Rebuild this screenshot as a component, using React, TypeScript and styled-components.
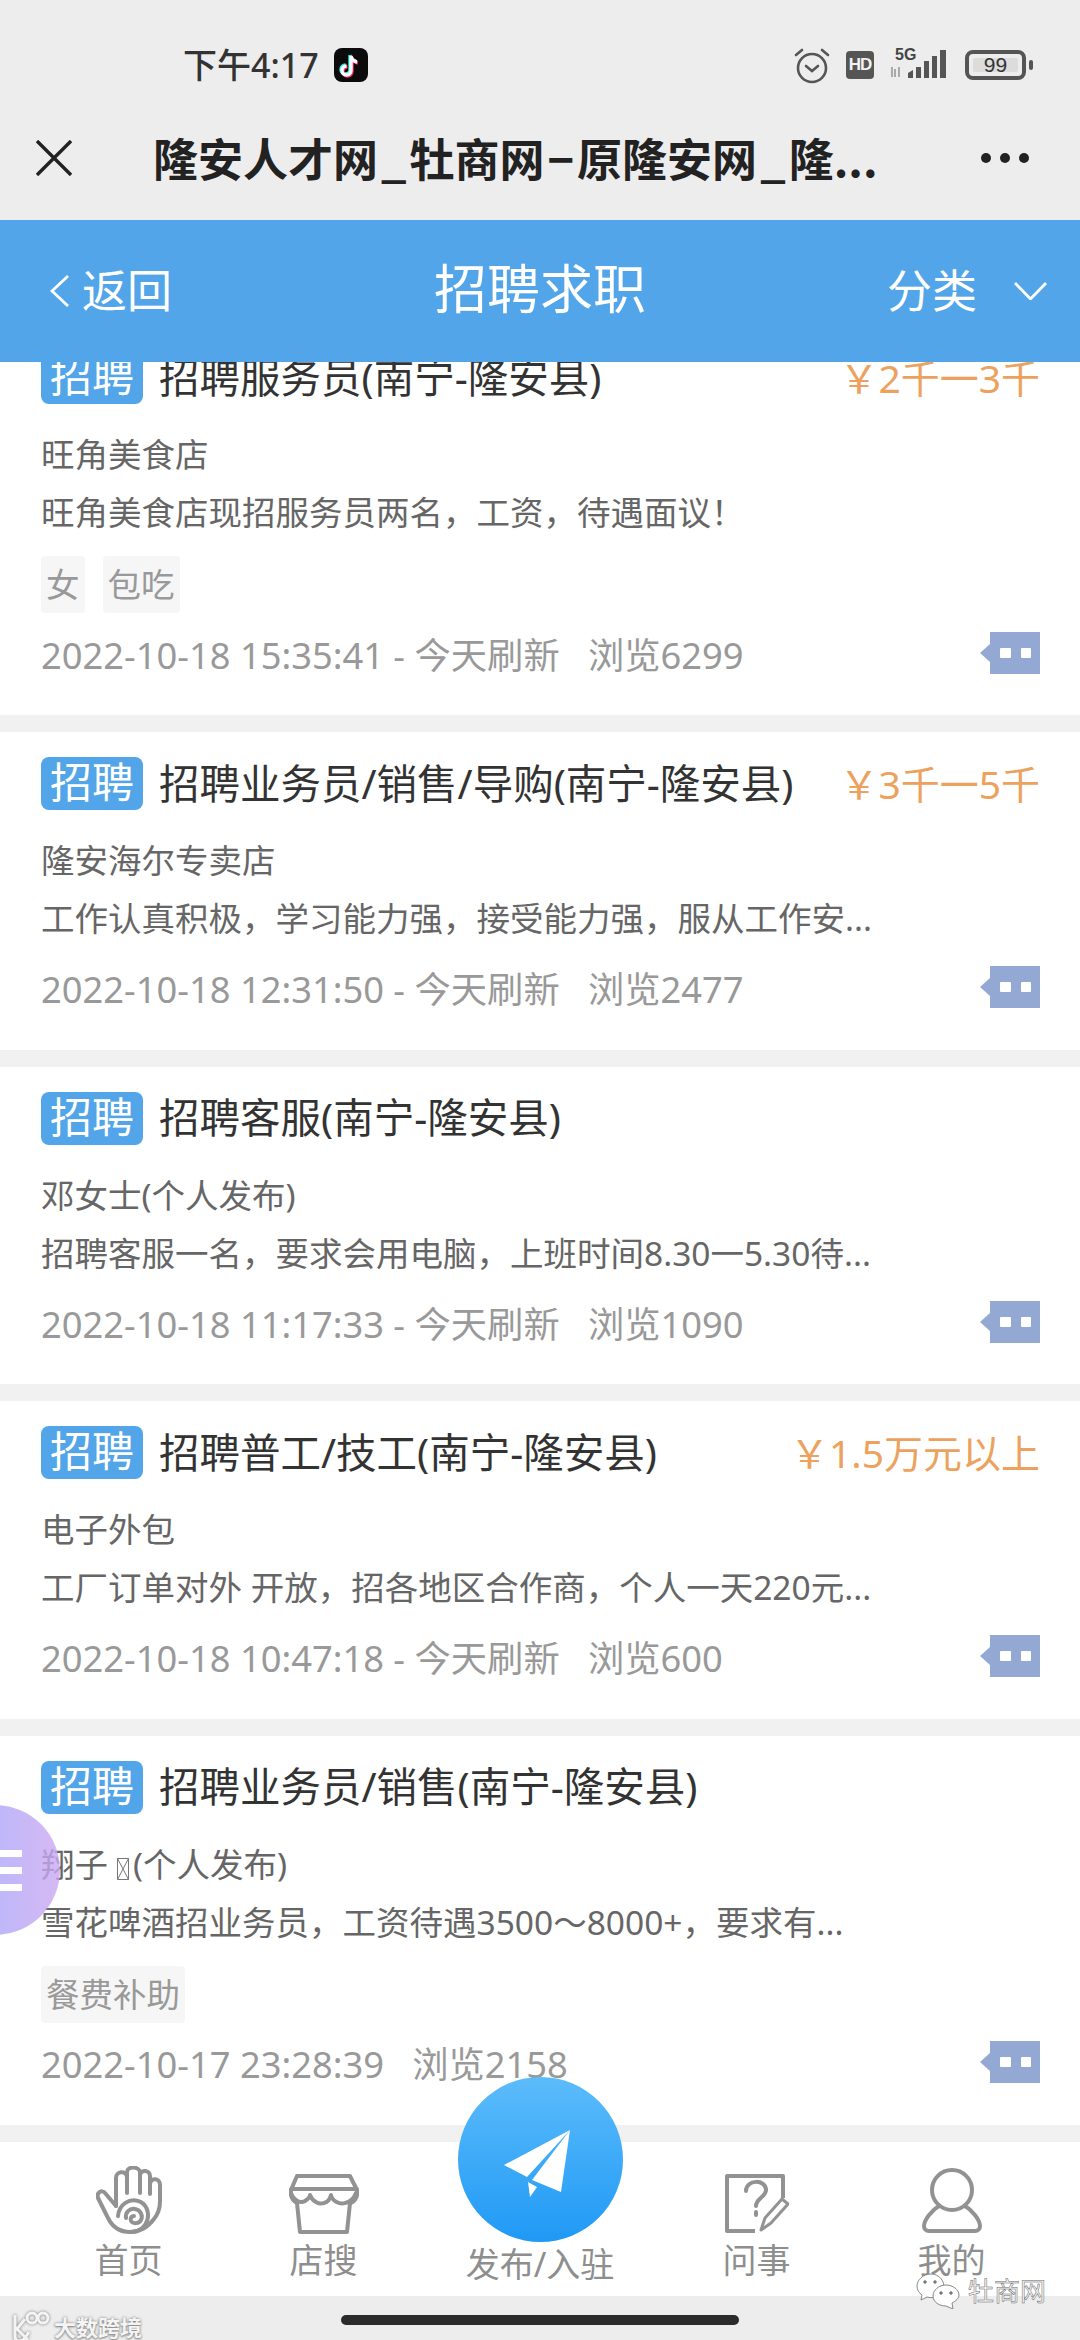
import React from "react";
import styled, { createGlobalStyle } from "styled-components";

const Global = createGlobalStyle`
  html, body { margin: 0; padding: 0; background: #fff; }
  * { box-sizing: border-box; }
`;

const FONT = `"Noto Sans", "Noto Sans CJK SC", sans-serif`;

const Page = styled.div`
  position: relative;
  width: 1080px;
  height: 2340px;
  overflow: hidden;
  display: flex;
  flex-direction: column;
  background: #f1f1f1;
  font-family: ${FONT};
`;

const TopArea = styled.div`
  background: #ededed;
  height: 220px;
  flex: none;
  display: flex;
  flex-direction: column;
`;

const StatusBar = styled.div`
  height: 110px;
  padding: 48px 54px 0 183px;
  display: flex;
  align-items: flex-start;
`;

const Time = styled.span`
  font-size: 34px;
  line-height: 34px;
  font-weight: 500;
  color: #333;
  margin-right: 15px;
`;

const StatusRight = styled.div`
  margin-left: auto;
  display: flex;
  align-items: flex-start;
`;

const HdBadge = styled.span`
  width: 28px;
  height: 28px;
  margin: 3px 17px 0 16px;
  border-radius: 4px;
  background: #555;
  color: #f2f2f2;
  font: 700 17px/28px "Liberation Sans", sans-serif;
  letter-spacing: -1px;
  text-align: center;
`;

const Signal = styled.div`
  position: relative;
  width: 59px;
  height: 32px;
  margin-right: 15px;
`;

const FiveG = styled.span`
  position: absolute;
  left: 4px;
  top: -1px;
  font: 700 16px/16px "Liberation Sans", sans-serif;
  color: #444;
`;

const Battery = styled.div`
  width: 61px;
  height: 30px;
  margin-top: 2px;
  padding: 4px;
  border: 4px solid #555;
  border-radius: 8px;
  position: relative;
`;

const BatteryLevel = styled.span`
  display: block;
  height: 14px;
  background: #dcdcdc;
  border-radius: 2px;
  color: #333;
  font: 400 21px/14px "Liberation Sans", sans-serif;
  text-align: center;
`;

const BatteryTip = styled.span`
  position: absolute;
  right: -11px;
  top: 6px;
  width: 4px;
  height: 10px;
  border-radius: 2px;
  background: #555;
`;

const NavBar = styled.div`
  height: 110px;
  padding: 0 50px 14px 36px;
  display: flex;
  align-items: center;
`;

const NavTitle = styled.span`
  margin-left: 81px;
  white-space: nowrap;
  font-family: "Noto Sans CJK SC", sans-serif;
  font-size: 45px;
  line-height: 60px;
  font-weight: 700;
  color: #222;
`;

const NavMark = styled.span`
  padding: 0 3px;
`;

const Header = styled.header`
  flex: none;
  height: 142px;
  background: #52a5e8;
  color: #fff;
  position: relative;
  z-index: 2;
  display: grid;
  grid-template-columns: 1fr auto 1fr;
  align-items: center;
  padding: 0 33px;
`;

const Back = styled.div`
  display: flex;
  align-items: center;
  gap: 12px;
  margin-left: 17px;
  font-size: 45px;
  line-height: 50px;
`;

const HeaderTitle = styled.div`
  font-size: 53px;
  line-height: 60px;
  margin-top: -4px;
`;

const Category = styled.div`
  display: flex;
  align-items: center;
  justify-content: flex-end;
  gap: 37px;
  font-size: 45px;
  line-height: 50px;
`;

const List = styled.main`
  flex: none;
  height: 1780px;
  overflow: hidden;
`;

const Cards = styled.div`
  margin-top: -36px;
  display: flex;
  flex-direction: column;
  gap: 17px;
`;

const Card = styled.article`
  background: #fff;
  padding: 25px 40px 36.5px 41px;
`;

const CardHead = styled.div`
  display: flex;
  align-items: center;
  height: 53px;
`;

const Badge = styled.span`
  width: 102px;
  height: 53px;
  flex: none;
  border-radius: 8px;
  background: #52a5e8;
  color: #fff;
  font-size: 42px;
  line-height: 50px;
  text-align: center;
`;

const CardTitle = styled.span`
  margin-left: 16px;
  font-size: 40.5px;
  line-height: 50px;
  color: #333;
  white-space: nowrap;
`;

const Price = styled.span`
  margin-left: auto;
  font-size: 39px;
  line-height: 50px;
  color: #eca25e;
  white-space: nowrap;
`;

const Company = styled.div`
  margin-top: 32px;
  font-size: 33.5px;
  line-height: 36px;
  color: #666;
`;

const Desc = styled.div`
  margin-top: 22px;
  font-size: 33.5px;
  line-height: 36px;
  color: #666;
  white-space: nowrap;
`;

const Tags = styled.div`
  display: flex;
  gap: 18px;
  margin: 26px 0 -11.5px;
`;

const Tag = styled.span`
  height: 57px;
  padding: 0 5px;
  border-radius: 4px;
  background: #f6f6f6;
  color: #999;
  font-size: 33.5px;
  line-height: 56px;
`;

const Meta = styled.div`
  margin-top: 35px;
  height: 42px;
  padding-bottom: 5px;
  display: flex;
  align-items: center;
  justify-content: space-between;
  color: #999;
  font-size: 36.3px;
  line-height: 37px;
  white-space: pre;
`;

const Tofu = styled.svg`
  width: 12px;
  height: 22px;
  margin: 0 4px 0 9px;
  vertical-align: -3px;
`;

const CommentSvg = styled.svg`
  flex: none;
  margin-top: -5px;
`;

const TabBar = styled.nav`
  flex: none;
  height: 154px;
  background: #fff;
  padding: 0 31px;
  display: grid;
  grid-template-columns: 195px 195px 1fr 195px 195px;
`;

const Tab = styled.div<{ $publish?: boolean }>`
  display: flex;
  flex-direction: column;
  align-items: center;
  justify-content: flex-end;
  gap: ${(p) => (p.$publish ? "0" : "8px")};
  padding-bottom: ${(p) => (p.$publish ? "14px" : "18px")};
  color: #8e8e8e;
  font-size: 34px;
  line-height: 36px;
`;

const TabIcon = styled.svg`
  display: block;
  fill: none;
  stroke: #929292;
  stroke-width: 4;
  stroke-linecap: round;
  stroke-linejoin: round;
`;

const BottomBar = styled.div`
  flex: 1;
  background: #ededed;
  display: flex;
  justify-content: center;
  padding-top: 19px;
`;

const HomeIndicator = styled.div`
  width: 398px;
  height: 10px;
  border-radius: 5px;
  background: #2b2b2b;
`;

const Fab = styled.div`
  position: absolute;
  left: 458px;
  top: 2077px;
  width: 165px;
  height: 165px;
  border-radius: 50%;
  background: linear-gradient(#5cbcfb, #2099f5);
  z-index: 3;
`;

const SideMenu = styled.div`
  position: absolute;
  left: -70px;
  top: 1805px;
  width: 130px;
  height: 130px;
  border-radius: 50%;
  background: linear-gradient(90deg, #8fa4ff, #cca8f2);
  opacity: 0.8;
  z-index: 3;
  display: flex;
  flex-direction: column;
  align-items: flex-end;
  justify-content: center;
  gap: 10px;
  padding-right: 38px;
`;

const MenuLine = styled.span`
  width: 22px;
  height: 7px;
  background: #fff;
`;

const WatermarkLeft = styled.div`
  position: absolute;
  left: 10px;
  top: 2309px;
  display: flex;
  align-items: center;
  gap: 4px;
  z-index: 4;
  color: #f4f4f4;
  font-size: 22px;
  line-height: 28px;
  font-weight: 700;
  text-shadow: 0 0 3px #888, 0 1px 2px #888;
`;

const WatermarkRight = styled.div`
  position: absolute;
  left: 916px;
  top: 2273px;
  display: flex;
  align-items: center;
  gap: 8px;
  z-index: 4;
  color: #f8f8f8;
  font-size: 26px;
  line-height: 30px;
  -webkit-text-stroke: 0.5px #666;
`;

const Close = () => (
  <svg width="36" height="36" viewBox="0 0 36 36" fill="none" stroke="#222" strokeWidth="3.4">
    <path d="M1 1 35 35M35 1 1 35" />
  </svg>
);

const Dots = () => (
  <svg width="50" height="12" viewBox="0 0 50 12" fill="#222" style={{ marginLeft: "auto" }}>
    <circle cx="6" cy="6" r="5" />
    <circle cx="25" cy="6" r="5" />
    <circle cx="44" cy="6" r="5" />
  </svg>
);

const Alarm = () => (
  <svg width="36" height="36" viewBox="0 0 36 36" fill="none" stroke="#555" strokeWidth="2.6" strokeLinecap="round">
    <circle cx="18" cy="20" r="14" />
    <path d="M12 18l6 5 6-5M2 7l6-5M34 7l-6-5" />
  </svg>
);

const Tiktok = () => (
  <svg width="34" height="34" viewBox="0 0 34 34">
    <rect width="34" height="34" rx="8" fill="#0b0b0b" />
    <g fill="none" strokeWidth="3.4">
      <path d="M17 8v14.5a4.5 4.5 0 1 1-4.5-4.5M17 8c.5 3.5 3 5.5 6 6" stroke="#25f4ee" transform="translate(-1 -1)" />
      <path d="M17 8v14.5a4.5 4.5 0 1 1-4.5-4.5M17 8c.5 3.5 3 5.5 6 6" stroke="#fe2c55" transform="translate(1 1)" />
      <path d="M17 8v14.5a4.5 4.5 0 1 1-4.5-4.5M17 8c.5 3.5 3 5.5 6 6" stroke="#fff" />
    </g>
  </svg>
);

const SignalBars = () => (
  <svg width="59" height="32" viewBox="0 0 59 32" style={{ position: "absolute", left: 0, top: 0 }}>
    <path d="M1 19v10M4 21v8M8 29V19" stroke="#aaa" strokeWidth="2" fill="none" />
    <path d="M17 30V25l5-3v8zM25 30V19h5v11zM33 30V13h5v17zM41 30V8h5v22zM49 30V2h6v28z" fill="#555" />
  </svg>
);

const ChevronLeft = () => (
  <svg width="20" height="32" viewBox="0 0 20 32" fill="none" stroke="#fff" strokeWidth="2.8">
    <path d="M18 1 2 16l16 15" />
  </svg>
);

const ChevronDown = () => (
  <svg width="33" height="18" viewBox="0 0 33 18" fill="none" stroke="#fff" strokeWidth="2.8">
    <path d="M1 1l15.5 16L32 1" />
  </svg>
);

const CommentIcon = () => (
  <CommentSvg width="60" height="42" viewBox="0 0 60 42">
    <path d="M10 0h50v42H10V30L0 21l10-9z" fill="#93a8d2" />
    <rect x="20" y="16" width="11" height="10" rx="1" fill="#fff" />
    <rect x="41" y="16" width="10" height="10" rx="1" fill="#fff" />
  </CommentSvg>
);

const HandIcon = () => (
  <TabIcon width="66" height="68" viewBox="0 0 66 68">
    <path d="M20 40 9 27c-3-4-9 0-7 5l10 20c5 10 13 14 22 14 11 0 18-5 24-13 5-6 6-12 6-18V19c0-7-9-8-10-1v10" />
    <path d="M20 40V12c0-7 10-8 11-1v16M31 11V6c0-6 12-6 13 0v21M44 9c1-6 10-5 10 1v9" />
    <path d="M30 52c-1-6 4-10 9-9 6 1 8 7 6 11-2 4-8 4-10 1-1-2 0-5 3-5" />
    <path d="M22 50c1-12 12-18 20-15 8 2 12 11 9 20-2 6-8 10-14 11" />
  </TabIcon>
);

const StoreIcon = () => (
  <TabIcon width="70" height="60" viewBox="0 0 70 60">
    <path d="M8 2h53l7 14c1 6-1 10-6 13M8 2 2 16c-1 6 1 10 6 13M2 15h66" />
    <path d="M2 19c2 7 9 11 14 8 3-2 5-4 5-6 2 6 9 10 14 8 4-1 6-4 7-8 1 6 9 10 14 8 6-1 9-5 11-10" />
    <path d="M8 29l3 29h47l3-29" />
  </TabIcon>
);

const AskIcon = () => (
  <TabIcon width="64" height="60" viewBox="0 0 64 60">
    <path d="M30 57H2V2h56v22" strokeLinecap="butt" />
    <path d="M21 17c0-12 20-12 20-1 0 7-10 8-10 16M31 38v3" />
    <path d="M36 56l4-12 17-19 6 5-17 19zM36 56l10-7" strokeWidth="3" />
  </TabIcon>
);

const UserIcon = () => (
  <TabIcon width="60" height="66" viewBox="0 0 60 66">
    <circle cx="30" cy="22" r="20" />
    <path d="M17 38C10 42 2 52 2 58c0 3 2 5 5 5h46c3 0 5-2 5-5 0-6-8-16-15-20" />
  </TabIcon>
);

const Plane = () => (
  <svg width="165" height="165" viewBox="0 0 165 165" fill="#fff">
    <path d="M112 53 46 88l23 12z" />
    <path d="M112 53 74 103l29 12z" />
    <path d="M70 105l2 15 7-10z" />
  </svg>
);

const WeChat = () => (
  <svg width="44" height="36" viewBox="0 0 44 36" fill="#fff" stroke="#888" strokeWidth="1">
    <path d="M15 1C7 1 1 7 1 13c0 4 2 7 5 9l-1 5 6-3c4 1 8 1 11-1 5-3 7-9 5-14-2-5-7-8-12-8z" />
    <path d="M30 12c-7 0-13 5-13 11s6 10 13 10l7 3-1-6c4-2 7-5 7-8 0-5-6-10-13-10z" />
    <circle cx="25" cy="20" r="1.3" fill="#666" />
    <circle cx="35" cy="20" r="1.3" fill="#666" />
    <circle cx="9" cy="9" r="1.3" fill="#666" />
    <circle cx="19" cy="9" r="1.3" fill="#666" />
  </svg>
);

const KuaiLogo = () => (
  <svg width="40" height="36" viewBox="0 0 40 36" fill="none" stroke="#f4f4f4" strokeWidth="3" style={{ filter: "drop-shadow(0 0 1.5px #777)" }}>
    <path d="M5 6v22c0 5 7 5 10 1l4-6M15 10 7 20l11 11" />
    <circle cx="22" cy="9" r="5" />
    <circle cx="33" cy="9" r="5" />
  </svg>
);

type Job = {
  title: string;
  price?: string;
  company: React.ReactNode;
  desc: string;
  tags?: string[];
  meta: string;
};

const jobs: Job[] = [
  {
    title: "招聘服务员(南宁-隆安县)",
    price: "￥2千一3千",
    company: "旺角美食店",
    desc: "旺角美食店现招服务员两名，工资，待遇面议！",
    tags: ["女", "包吃"],
    meta: "2022-10-18 15:35:41 - 今天刷新   浏览6299",
  },
  {
    title: "招聘业务员/销售/导购(南宁-隆安县)",
    price: "￥3千一5千",
    company: "隆安海尔专卖店",
    desc: "工作认真积极，学习能力强，接受能力强，服从工作安...",
    meta: "2022-10-18 12:31:50 - 今天刷新   浏览2477",
  },
  {
    title: "招聘客服(南宁-隆安县)",
    company: "邓女士(个人发布)",
    desc: "招聘客服一名，要求会用电脑，上班时间8.30一5.30待...",
    meta: "2022-10-18 11:17:33 - 今天刷新   浏览1090",
  },
  {
    title: "招聘普工/技工(南宁-隆安县)",
    price: "￥1.5万元以上",
    company: "电子外包",
    desc: "工厂订单对外 开放，招各地区合作商，个人一天220元...",
    meta: "2022-10-18 10:47:18 - 今天刷新   浏览600",
  },
  {
    title: "招聘业务员/销售(南宁-隆安县)",
    company: (
      <>
        翔子
        <Tofu viewBox="0 0 12 22" fill="none" stroke="#777" strokeWidth="1">
          <path d="M.5.5h11v21H.5zM.5.5l11 21M11.5.5l-11 21" />
        </Tofu>
        (个人发布)
      </>
    ),
    desc: "雪花啤酒招业务员，工资待遇3500～8000+，要求有...",
    tags: ["餐费补助"],
    meta: "2022-10-17 23:28:39   浏览2158",
  },
];

export default function App() {
  return (
    <Page>
      <Global />
      <TopArea>
        <StatusBar>
          <Time>下午4:17</Time>
          <Tiktok />
          <StatusRight>
            <Alarm />
            <HdBadge>HD</HdBadge>
            <Signal>
              <SignalBars />
              <FiveG>5G</FiveG>
            </Signal>
            <Battery>
              <BatteryLevel>99</BatteryLevel>
              <BatteryTip />
            </Battery>
          </StatusRight>
        </StatusBar>
        <NavBar>
          <Close />
          <NavTitle>
            隆安人才网<NavMark>_</NavMark>牡商网<NavMark>−</NavMark>原隆安网<NavMark>_</NavMark>隆...
          </NavTitle>
          <Dots />
        </NavBar>
      </TopArea>
      <Header>
        <Back>
          <ChevronLeft />
          返回
        </Back>
        <HeaderTitle>招聘求职</HeaderTitle>
        <Category>
          分类
          <ChevronDown />
        </Category>
      </Header>
      <List>
        <Cards>
          {jobs.map((job) => (
            <Card key={job.meta}>
              <CardHead>
                <Badge>招聘</Badge>
                <CardTitle>{job.title}</CardTitle>
                {job.price && <Price>{job.price}</Price>}
              </CardHead>
              <Company>{job.company}</Company>
              <Desc>{job.desc}</Desc>
              {job.tags && (
                <Tags>
                  {job.tags.map((tag) => (
                    <Tag key={tag}>{tag}</Tag>
                  ))}
                </Tags>
              )}
              <Meta>
                {job.meta}
                <CommentIcon />
              </Meta>
            </Card>
          ))}
        </Cards>
      </List>
      <TabBar>
        <Tab>
          <HandIcon />
          首页
        </Tab>
        <Tab>
          <StoreIcon />
          店搜
        </Tab>
        <Tab $publish>发布/入驻</Tab>
        <Tab>
          <AskIcon />
          问事
        </Tab>
        <Tab>
          <UserIcon />
          我的
        </Tab>
      </TabBar>
      <BottomBar>
        <HomeIndicator />
      </BottomBar>
      <Fab>
        <Plane />
      </Fab>
      <SideMenu>
        <MenuLine />
        <MenuLine />
        <MenuLine />
      </SideMenu>
      <WatermarkLeft>
        <KuaiLogo />
        大数跨境
      </WatermarkLeft>
      <WatermarkRight>
        <WeChat />
        牡商网
      </WatermarkRight>
    </Page>
  );
}
